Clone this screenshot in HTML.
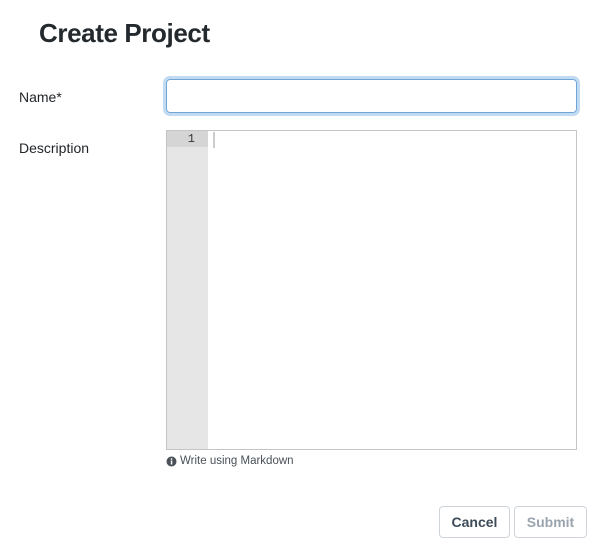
<!DOCTYPE html>
<html><head><style>
body{margin:0;width:603px;height:560px;background:#fff;font-family:"Liberation Sans",sans-serif;color:#212529;position:relative;overflow:hidden}
.a{position:absolute}
h1{position:absolute;left:39px;top:18px;margin:0;font-size:26px;font-weight:bold;color:#24292e;letter-spacing:-0.4px}
.lbl{font-size:14px;color:#212529}
.inp{left:166px;top:79px;width:409px;height:32px;border:1px solid #6ea6dc;border-radius:4px;box-shadow:0 0 0 3px #c3dbf0}
.ed{left:166px;top:130px;width:409px;height:318px;border:1px solid #c4c4c4;background:#fff}
.gut{position:absolute;left:0;top:0;width:41px;height:100%;background:#e6e6e6}
.ln{position:absolute;left:0;top:0;width:41px;height:16px;background:#d5d5d5;font-family:"Liberation Mono",monospace;font-size:12px;text-align:right;box-sizing:border-box;padding-right:13px;line-height:16px;color:#333}
.cur{position:absolute;left:46px;top:1px;width:2px;height:16px;background:#ccc}
.help{left:166px;top:455px;font-size:11.5px;color:#495057;display:flex;align-items:center}
.btn{top:506px;border:1px solid #ced4da;border-radius:4px;font-size:14px;font-weight:bold;display:flex;align-items:center;justify-content:center;box-sizing:border-box;height:32px}
</style></head><body>
<h1>Create Project</h1>
<div class="a lbl" style="left:19px;top:89px">Name*</div>
<div class="a lbl" style="left:19px;top:140px">Description</div>
<div class="a inp"></div>
<div class="a ed"><div class="gut"></div><div class="ln">1</div><div class="cur"></div></div>
<div class="a help"><svg width="11" height="11" viewBox="0 0 11 11" style="margin-right:3px"><circle cx="5.5" cy="5.5" r="5" fill="#495057"/><rect x="4.8" y="4.5" width="1.5" height="4" fill="#fff"/><circle cx="5.5" cy="3" r="0.9" fill="#fff"/></svg>Write using Markdown</div>
<div class="a btn" style="left:439px;width:71px;color:#3d4a57">Cancel</div>
<div class="a btn" style="left:514px;width:73px;color:#9aa4ae">Submit</div>
</body></html>
